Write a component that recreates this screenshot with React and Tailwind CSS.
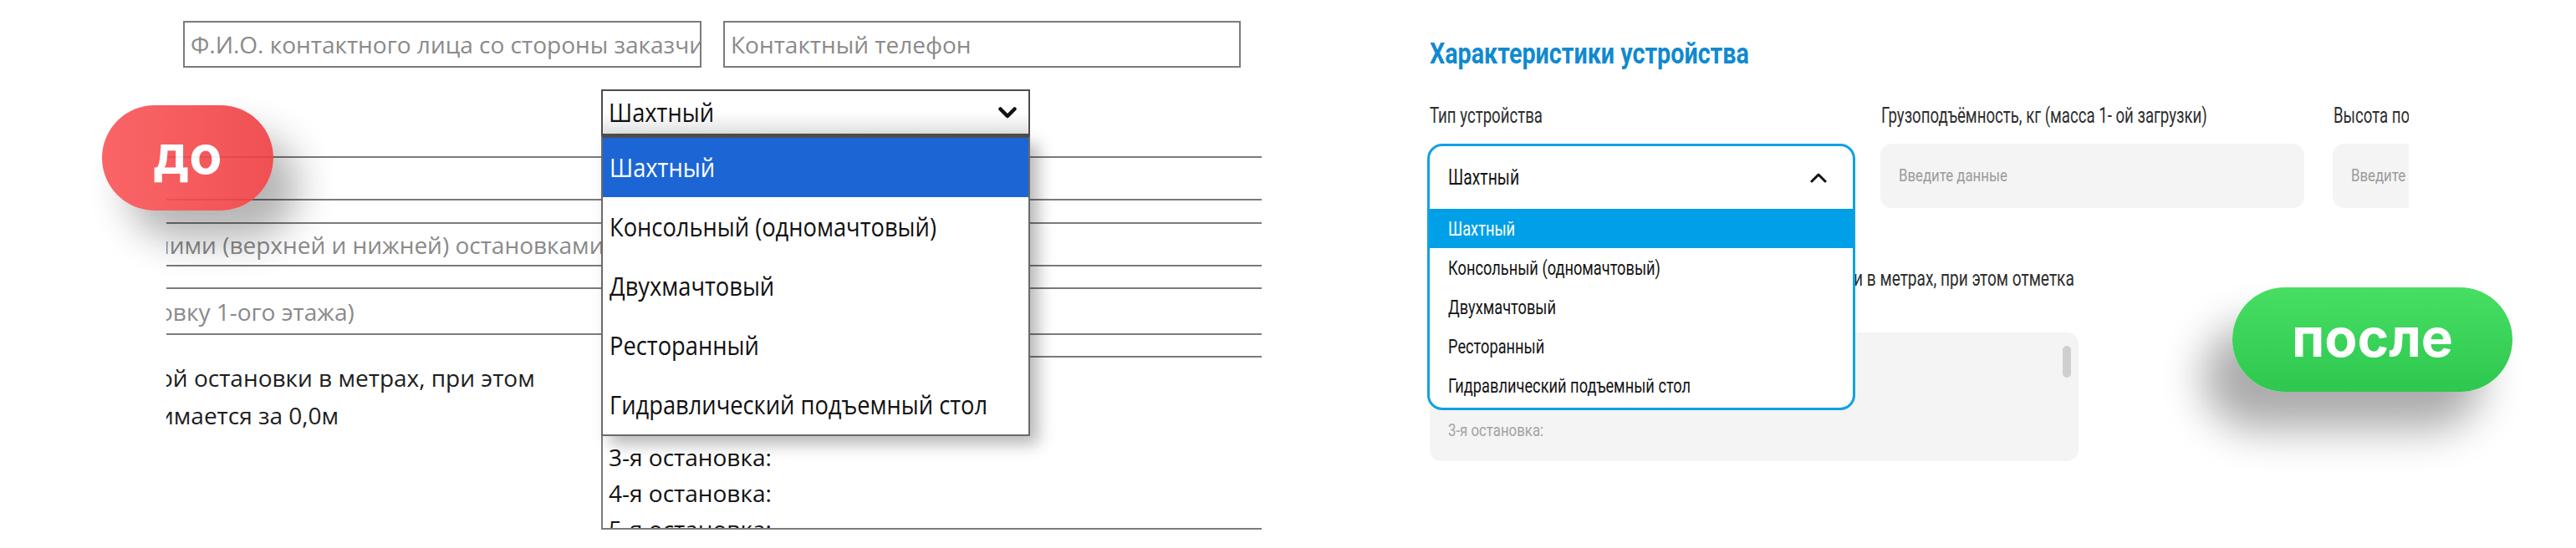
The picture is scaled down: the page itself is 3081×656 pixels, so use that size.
import React from "react";

const DEVICE_TYPES = [
  "Шахтный",
  "Консольный (одномачтовый)",
  "Двухмачтовый",
  "Ресторанный",
  "Гидравлический подъемный стол",
];

const STOPS = ["1-я остановка:", "2-я остановка:", "3-я остановка:", "4-я остановка:", "5-я остановка:"];

function Narrow({ children, className = "" }) {
  return <span className={`inline-block whitespace-nowrap ${className}`}>{children}</span>;
}

function ChevronDown() {
  return (
    <svg width="22" height="14" viewBox="0 0 22 14" className="shrink-0">
      <polyline points="2.5,2.5 11,11 19.5,2.5" fill="none" stroke="#111" strokeWidth="4.5" strokeLinecap="round" strokeLinejoin="round" />
    </svg>
  );
}

function ChevronUp() {
  return (
    <svg width="20" height="13" viewBox="0 0 20 13" className="shrink-0">
      <polyline points="2,11 10,3 18,11" fill="none" stroke="#111" strokeWidth="3" strokeLinecap="round" strokeLinejoin="round" />
    </svg>
  );
}

/* Old order form: plain bordered inputs and a native-looking select */
function LegacyForm() {
  return (
    <div className="relative h-full w-[1310px] shrink-0 overflow-hidden font-['Open_Sans',sans-serif]">
      <div className="flex gap-[26px] pl-[20px] pt-[25px]">
        <div className="flex h-[56px] w-[620px] shrink-0 items-center overflow-hidden border-2 border-[#7b7b7b] px-[7px] text-[28px] text-[#8a8a8a]">
          <span className="whitespace-nowrap">Ф.И.О. контактного лица со стороны заказчика</span>
        </div>
        <div className="flex h-[56px] w-[619px] shrink-0 items-center overflow-hidden border-2 border-[#7b7b7b] px-[7px] text-[28px] text-[#8a8a8a]">
          <span className="whitespace-nowrap">Контактный телефон</span>
        </div>
      </div>

      <div className="ml-[520px] mt-[26px] flex h-[55px] w-[513px] items-center justify-between border-2 border-[#4d4d4d] bg-gradient-to-b from-white via-white to-[#e2e2e2] pl-[7px] pr-[14px] text-[31px] text-[#111]">
        <Narrow className="origin-left scale-x-[0.88]">Шахтный</Narrow>
        <ChevronDown />
      </div>

      <div className="mt-[25px] h-[53px] border-y-2 border-[#7b7b7b]" />
      <div className="mt-[26px] flex h-[53px] items-center overflow-hidden border-y-2 border-[#7b7b7b] text-[28px] text-[#8a8a8a]">
        <span className="-ml-[14px] whitespace-nowrap">ними (верхней и нижней) остановками</span>
      </div>
      <div className="mt-[25px] flex h-[57px] items-center overflow-hidden border-y-2 border-[#7b7b7b] text-[28px] text-[#8a8a8a]">
        <span className="-ml-[9px] whitespace-nowrap">овку 1-ого этажа)</span>
      </div>

      <div className="mt-[25px] flex">
        <div className="w-[520px] shrink-0 overflow-hidden pt-[4px] text-[28px] leading-[45px] text-[#1d1d1d]">
          <div className="-ml-[9px] whitespace-nowrap">ой остановки в метрах, при этом</div>
          <div className="-ml-[9px] whitespace-nowrap">имается за 0,0м</div>
        </div>
        <div className="h-[208px] w-[820px] shrink-0 overflow-hidden border-2 border-[#7b7b7b] px-[7px] pt-[12px] text-[28px] leading-[43px] text-[#111]">
          {STOPS.map((s) => (
            <div key={s} className="whitespace-nowrap">{s}</div>
          ))}
        </div>
      </div>

      {/* expanded option list */}
      <div className="absolute left-[520px] top-[162px] z-10 w-[513px] border-x-2 border-b-2 border-t-[3px] border-x-[#6a6a6a] border-b-[#6a6a6a] border-t-[#4d4d4d] bg-white shadow-[10px_10px_18px_rgba(0,0,0,0.28)]">
        {DEVICE_TYPES.map((t, i) => (
          <div
            key={t}
            className={`flex h-[71px] items-center px-[8px] text-[31px] ${i === 0 ? "bg-[#1b66d4] text-white" : "text-[#111]"}`}
          >
            <Narrow className="origin-left scale-x-[0.88]">{t}</Narrow>
          </div>
        ))}
      </div>
    </div>
  );
}

/* Redesigned form: rounded fields with a custom dropdown */
function ModernForm() {
  return (
    <div className="relative h-full w-[1191px] shrink-0 overflow-hidden pl-[17px] font-['Roboto',sans-serif]">
      <h2 className="mt-[47px] pl-[3px] text-[35px] font-bold leading-none text-[#1089d0]">
        <Narrow className="origin-left scale-x-[0.82]">Характеристики устройства</Narrow>
      </h2>

      <div className="mt-[44px] flex">
        <div className="w-[512px] shrink-0">
          <div className="h-[25px] pl-[3px] text-[25px] leading-none text-[#2e2e2e]">
            <Narrow className="origin-left scale-x-[0.745]">Тип устройства</Narrow>
          </div>
          <div className="relative mt-[21px] h-[78px]">
            <div className="absolute left-0 top-0 z-10 w-[512px] overflow-hidden rounded-[18px] border-[3px] border-[#12a0e3] bg-white">
              <div className="flex h-[75px] items-center justify-between pl-[22px] pr-[31px] text-[26px] text-[#151515]">
                <Narrow className="origin-left scale-x-[0.745]">Шахтный</Narrow>
                <ChevronUp />
              </div>
              {DEVICE_TYPES.map((t, i) => (
                <div
                  key={t}
                  className={`flex h-[47px] items-center pl-[22px] text-[24px] ${i === 0 ? "bg-[#00a0e8] text-white" : "text-[#151515]"}`}
                >
                  <Narrow className="origin-left scale-x-[0.76]">{t}</Narrow>
                </div>
              ))}
              <div className="h-[3px]" />
            </div>
          </div>
        </div>

        <div className="ml-[30px] w-[507px] shrink-0">
          <div className="h-[25px] pl-[1px] text-[25px] leading-none text-[#2e2e2e]">
            <Narrow className="origin-left scale-x-[0.745]">Грузоподъёмность, кг (масса 1- ой загрузки)</Narrow>
          </div>
          <div className="mt-[21px] flex h-[77px] items-center rounded-[14px] bg-[#f4f4f4] pl-[22px] text-[21px] text-[#9b9b9b]">
            <Narrow className="origin-left scale-x-[0.8]">Введите данные</Narrow>
          </div>
        </div>

        <div className="ml-[34px] w-[507px] shrink-0">
          <div className="h-[25px] pl-[1px] text-[25px] leading-none text-[#2e2e2e]">
            <Narrow className="origin-left scale-x-[0.745]">Высота подъёма, м</Narrow>
          </div>
          <div className="mt-[21px] flex h-[77px] items-center rounded-[14px] bg-[#f4f4f4] pl-[22px] text-[21px] text-[#9b9b9b]">
            <Narrow className="origin-left scale-x-[0.8]">Введите данные</Narrow>
          </div>
        </div>
      </div>

      <div className="mt-[71px] h-[25px] w-[774px] overflow-hidden text-right text-[25px] leading-none text-[#2e2e2e]">
        <Narrow className="origin-right scale-x-[0.765]">Высота остановки в метрах, при этом отметка</Narrow>
      </div>

      <div className="relative ml-[3px] mt-[52px] h-[154px] w-[776px] overflow-hidden rounded-[14px] bg-[#f4f4f4] pl-[22px] pt-[27px] text-[21px] leading-[36px] text-[#a3a3a3]">
        {STOPS.slice(0, 3).map((s) => (
          <div key={s}>
            <Narrow className="origin-left scale-x-[0.8]">{s}</Narrow>
          </div>
        ))}
        <div className="absolute right-[9px] top-[16px] h-[38px] w-[10px] rounded-full bg-[#cfcfcf]" />
      </div>
    </div>
  );
}

export default function App() {
  return (
    <div className="relative flex h-[656px] w-[3081px] overflow-hidden bg-white">
      <div className="w-[199px] shrink-0" />
      <LegacyForm />
      <div className="w-[181px] shrink-0" />
      <ModernForm />

      <div className="absolute left-[122px] top-[126px] z-20 flex h-[126px] w-[205px] items-center justify-center rounded-full bg-gradient-to-r from-[#fb5558] to-[#ee3e41] opacity-90 shadow-[30px_35px_45px_rgba(0,0,0,0.32)]">
        <span className="-mt-[8px] font-['Inter',sans-serif] text-[64px] font-bold leading-none text-white">до</span>
      </div>

      <div className="absolute left-[2670px] top-[344px] z-20 flex h-[125px] w-[335px] items-center justify-center rounded-full bg-gradient-to-b from-[#46df63] to-[#2ec74f] shadow-[-35px_45px_50px_rgba(0,0,0,0.33)]">
        <span className="-mt-[6px] font-['Inter',sans-serif] text-[64px] font-bold leading-none text-white">после</span>
      </div>
    </div>
  );
}
